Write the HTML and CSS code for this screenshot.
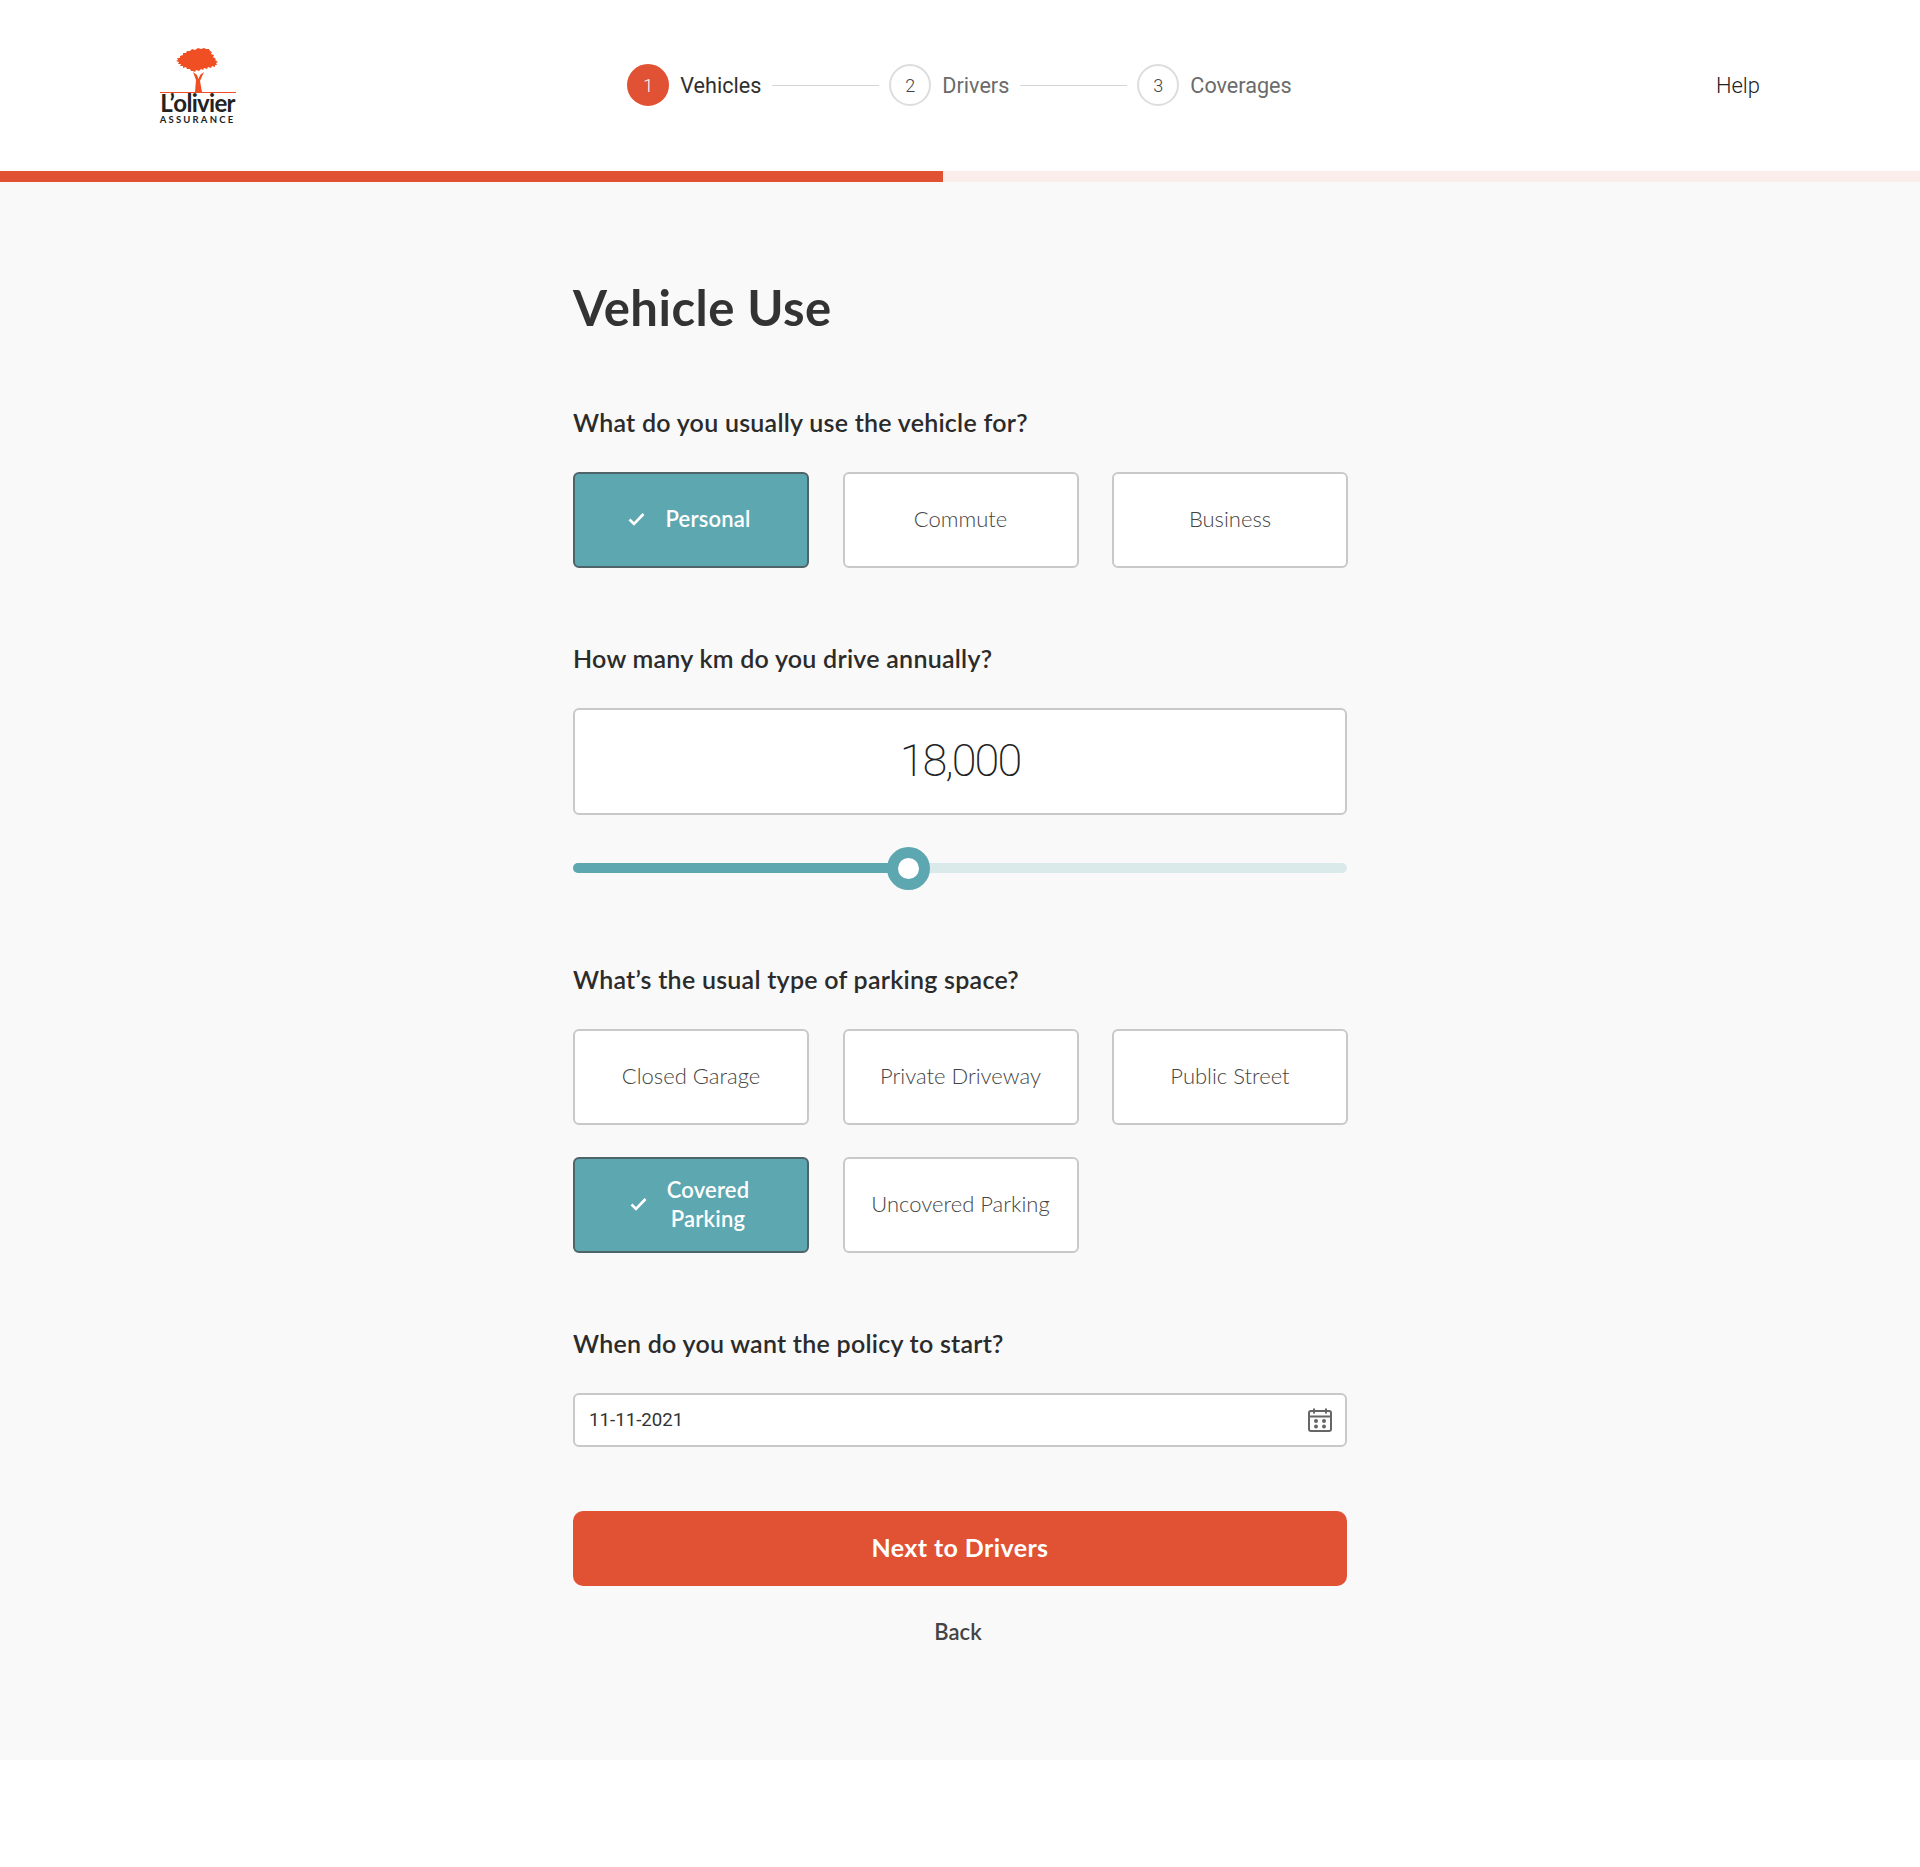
FILE: index.html
```html
<!DOCTYPE html>
<html lang="en">
<head>
  <meta charset="utf-8" />
  <title>Vehicle Use - L'olivier Assurance</title>
  <link rel="stylesheet" href="styles.css">
</head>
<body>
  <header class="topbar">
    <div class="logo">
      <svg class="logo-tree" viewBox="0 0 44 44" width="44" height="44" aria-hidden="true">
        <path fill="#f04e23" d="M0 13l2-1-1-2 3 0 0-2 3-1 0-2 3 0 1-2 3 0 2-2 3 1 3-2 3 1 3-1 2 1 3 0 1 2 2 1-1 2 3 1-1 2 3 2-1 1 3 2-2 1 1 2-2 0 0 2-3-1-1 2-3-1-1 2-3-1-1 2-2-1-2 2-3-1-1 2-2-1-2 0-1-2-3 0-1-2-3 1 0-2-3 0 1-2-3 0 1-2z"/>
        <path fill="#f04e23" d="M17 24l3 8-1 12h7l-2-11 4-9-4 3-1.500 4-1.500-4z"/>
      </svg>
      <div class="logo-rule"></div>
      <div class="logo-name">L’olivier</div>
      <div class="logo-sub">ASSURANCE</div>
    </div>

    <nav class="steps">
      <div class="step active"><span class="step-num">1</span><span class="step-name">Vehicles</span></div>
      <div class="step-line"></div>
      <div class="step"><span class="step-num">2</span><span class="step-name">Drivers</span></div>
      <div class="step-line"></div>
      <div class="step"><span class="step-num">3</span><span class="step-name">Coverages</span></div>
    </nav>

    <a class="help" href="#">Help</a>
  </header>

  <div class="progress"><div class="progress-fill"></div></div>

  <main class="page">
    <div class="form">
      <h1>Vehicle Use</h1>

      <!-- Usage -->
      <h2 class="q q-first">What do you usually use the vehicle for?</h2>
      <div class="options">
        <button class="option selected">
          <svg class="check" viewBox="0 0 17 14" width="17" height="14"><path d="M1.500 7.500l4.500 4.500 9.500-10" fill="none" stroke="#fff" stroke-width="2.600"/></svg>
          <span>Personal</span>
        </button>
        <button class="option">Commute</button>
        <button class="option">Business</button>
      </div>

      <!-- Distance -->
      <h2 class="q q-next">How many km do you drive annually?</h2>
      <div class="km-box">18,000</div>
      <div class="slider">
        <div class="slider-fill" style="width: 43.4%"><span class="slider-knob"></span></div>
      </div>

      <!-- Parking -->
      <h2 class="q q-parking">What’s the usual type of parking space?</h2>
      <div class="options">
        <button class="option">Closed Garage</button>
        <button class="option">Private Driveway</button>
        <button class="option">Public Street</button>
        <button class="option selected">
          <svg class="check" viewBox="0 0 17 14" width="17" height="14"><path d="M1.500 7.500l4.500 4.500 9.500-10" fill="none" stroke="#fff" stroke-width="2.600"/></svg>
          <span>Covered<br>Parking</span>
        </button>
        <button class="option">Uncovered Parking</button>
      </div>

      <!-- Start date -->
      <h2 class="q q-next">When do you want the policy to start?</h2>
      <div class="date-box">
        <span>11-11-2021</span>
        <svg viewBox="0 0 24 24" width="24" height="24" aria-hidden="true">
          <rect x="1" y="3" width="22" height="20" rx="2" fill="none" stroke="#666" stroke-width="2"/>
          <path d="M1 8.500h22M6 0.500v5M18 0.500v5" fill="none" stroke="#666" stroke-width="2"/>
          <circle cx="8" cy="13" r="2" fill="#666"/><circle cx="16" cy="13" r="2" fill="#666"/>
          <circle cx="8" cy="18.500" r="2" fill="#666"/><circle cx="16" cy="18.500" r="2" fill="#666"/>
        </svg>
      </div>

      <button class="next">Next to Drivers</button>
      <a class="back" href="#">Back</a>
    </div>
  </main>

  <div class="bottom"></div>
</body>
</html>
```

FILE: styles.css
```css
body {
  margin: 0;
  background-color: #fff;
  font-family: Lato, "Open Sans", sans-serif;
  color: #2f2f2f;
}

.topbar {
  height: 171px;
  box-sizing: border-box;
  padding: 0 160px 1px 159px;
  display: grid;
  grid-template-columns: 1fr auto 1fr;
  align-items: center;
  background-color: #fff;
}

.logo {
  width: 77px;
  align-self: start;
  margin-top: 48px;
  display: flex;
  flex-direction: column;
  align-items: center;
}

.logo-tree {
  display: block;
}

.logo-rule {
  width: 76px;
  flex-shrink: 0;
  height: 1px;
  background-color: #f04e23;
}

.logo-name {
  font-size: 24px;
  line-height: 16px;
  margin-top: 2px;
  font-weight: 700;
  letter-spacing: -0.7px;
  color: #222;
}

.logo-sub {
  font-size: 9.5px;
  line-height: 10px;
  margin-top: 4px;
  font-weight: 700;
  letter-spacing: 2.2px;
  color: #222;
}

.steps {
  display: flex;
  align-items: center;
  font-family: Roboto, sans-serif;
  font-size: 21.6px;
  color: #6b6b6b;
}

.step {
  display: flex;
  align-items: center;
  gap: 11px;
}

.step-num {
  width: 42px;
  height: 42px;
  box-sizing: border-box;
  border: 2px solid #ddd;
  border-radius: 50%;
  background-color: #fff;
  display: flex;
  align-items: center;
  justify-content: center;
  font-size: 18px;
  font-weight: 300;
  color: #444;
}

.step.active .step-num {
  background-color: #e05233;
  border-color: #e05233;
  color: #fff;
}

.step.active .step-name {
  color: #2f2f2f;
}

.step-line {
  width: 107px;
  height: 1px;
  margin: 0 10px 0 11px;
  background-color: #d5d5d5;
}

.help {
  justify-self: end;
  font-family: Roboto, sans-serif;
  font-size: 22px;
  font-weight: 300;
  color: #222;
  text-decoration: none;
}

.progress {
  height: 11px;
  background-color: #fbede9;
}

.progress-fill {
  width: 943px;
  height: 100%;
  background-color: #e05233;
}

.page {
  height: 1578px;
  box-sizing: border-box;
  background-color: #f9f9f9;
}

.form {
  width: 774px;
  margin: 0 auto;
  padding-top: 95px;
}

h1 {
  margin: 0;
  font-size: 49px;
  line-height: 60px;
  font-weight: 700;
  letter-spacing: 0.5px;
  color: #333;
}

.q {
  margin: 0 0 35px;
  font-size: 25px;
  line-height: 30px;
  font-weight: 600;
  letter-spacing: 0.25px;
  color: #2b2b2b;
}

.q-first {
  margin-top: 70px;
}

.q-next {
  margin-top: 75px;
}

.q-parking {
  margin-top: 91px;
}

.options {
  display: grid;
  grid-template-columns: repeat(3, 236px);
  column-gap: 33.5px;
  row-gap: 32px;
}

.option {
  height: 96px;
  padding: 0 0 3px;
  box-sizing: border-box;
  border: 2px solid #c9c9c9;
  border-radius: 6px;
  background-color: #fff;
  display: flex;
  align-items: center;
  justify-content: center;
  gap: 20px;
  font-family: Lato, sans-serif;
  font-size: 22px;
  line-height: 29px;
  font-weight: 300;
  color: #444;
}

.option.selected {
  padding-right: 3px;
  background-color: #5da7b1;
  border-color: #4f6468;
  color: #fff;
  font-weight: 600;
  letter-spacing: 0.2px;
}

.km-box {
  height: 107px;
  padding-bottom: 2px;
  box-sizing: border-box;
  border: 2px solid #c9c9c9;
  border-radius: 6px;
  background-color: #fff;
  display: flex;
  align-items: center;
  justify-content: center;
  font-family: Roboto, sans-serif;
  font-size: 45px;
  font-weight: 200;
  letter-spacing: -2px;
  color: #222;
}

.slider {
  height: 10px;
  margin-top: 48px;
  border-radius: 5px;
  background-color: #dae9e9;
}

.slider-fill {
  position: relative;
  height: 100%;
  border-radius: 5px 0 0 5px;
  background-color: #5da7b1;
}

.slider-knob {
  position: absolute;
  right: -21px;
  top: -16px;
  width: 43px;
  height: 43px;
  box-sizing: border-box;
  border: 11px solid #5da7b1;
  border-radius: 50%;
  background-color: #fff;
}

.date-box {
  height: 54px;
  padding: 0 13px 0 14px;
  box-sizing: border-box;
  border: 2px solid #c9c9c9;
  border-radius: 6px;
  background-color: #fff;
  display: flex;
  align-items: center;
  justify-content: space-between;
  font-family: Roboto, sans-serif;
  font-size: 18.7px;
  color: #333;
}

.next {
  display: block;
  width: 100%;
  height: 75px;
  margin-top: 64px;
  padding: 0 0 3px;
  border: none;
  border-radius: 10px;
  background-color: #e05233;
  font-family: Lato, sans-serif;
  font-size: 25px;
  font-weight: 700;
  letter-spacing: 0.4px;
  color: #fff;
}

.back {
  display: block;
  margin-top: 31px;
  padding-right: 4px;
  text-align: center;
  font-size: 22px;
  line-height: 30px;
  font-weight: 600;
  color: #444;
  text-decoration: none;
}

.bottom {
  height: 107px;
  background-color: #fff;
}
```
